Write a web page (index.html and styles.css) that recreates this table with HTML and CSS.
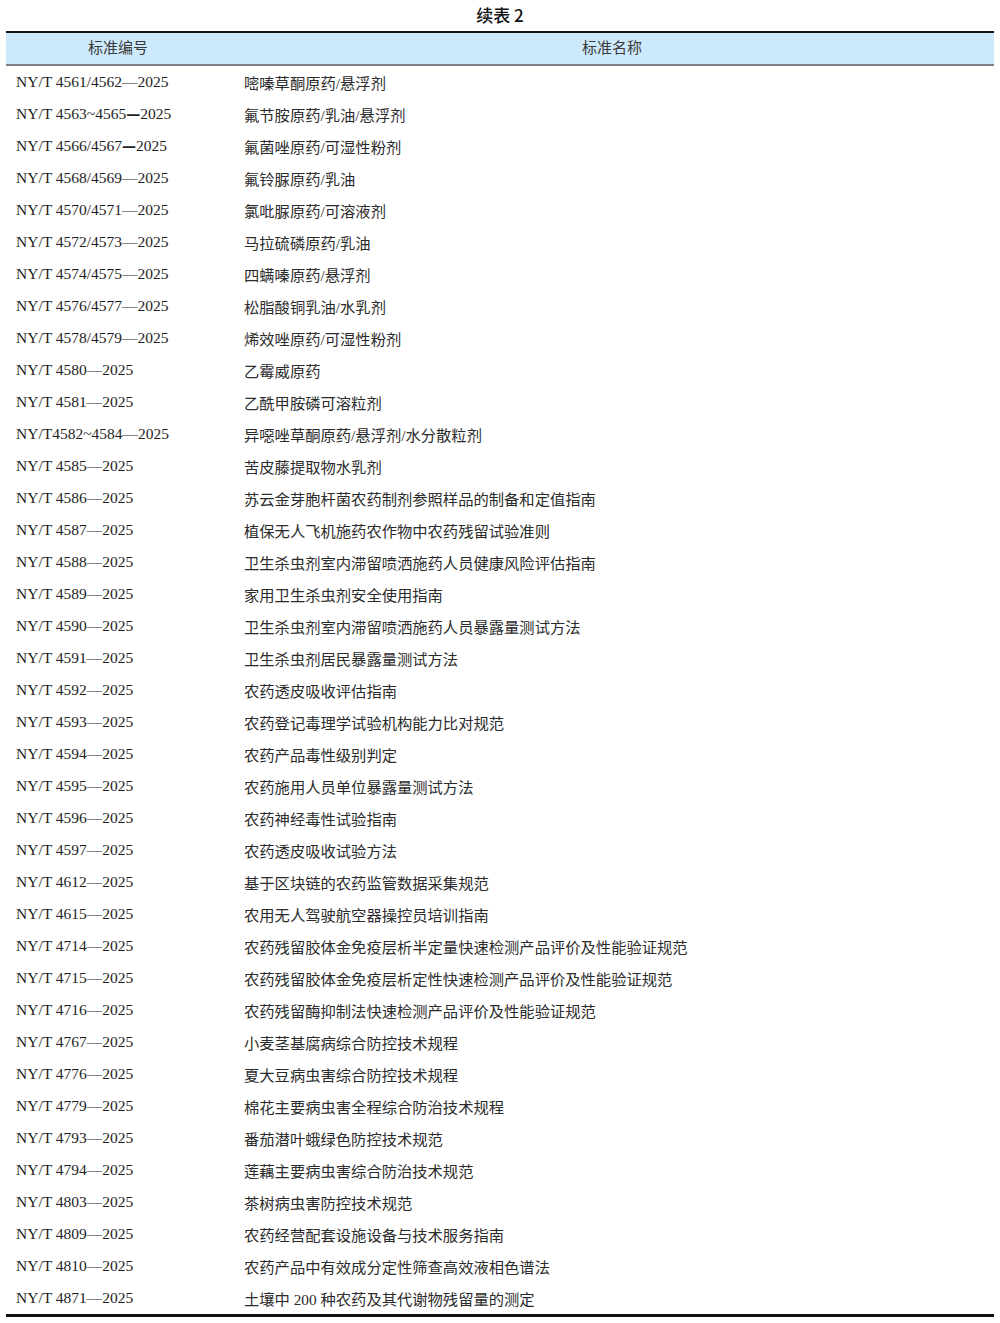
FILE: index.html
```html
<!DOCTYPE html>
<html lang="zh">
<head>
<meta charset="utf-8">
<link rel="stylesheet" href="styles.css">
</head>
<body>
<div class="title">续表 2</div>
<div class="table">
  <div class="head">
    <div class="hc c1">标准编号</div>
    <div class="hc c2">标准名称</div>
  </div>
  <div class="body">
    <div class="row"><div class="code">NY/T 4561/4562—2025</div><div class="name">嘧嗪草酮原药/悬浮剂</div></div>
    <div class="row"><div class="code">NY/T 4563~4565<span class="bold-dash">—</span>2025</div><div class="name">氟节胺原药/乳油/悬浮剂</div></div>
    <div class="row"><div class="code">NY/T 4566/4567<span class="bold-dash">—</span>2025</div><div class="name">氟菌唑原药/可湿性粉剂</div></div>
    <div class="row"><div class="code">NY/T 4568/4569—2025</div><div class="name">氟铃脲原药/乳油</div></div>
    <div class="row"><div class="code">NY/T 4570/4571—2025</div><div class="name">氯吡脲原药/可溶液剂</div></div>
    <div class="row"><div class="code">NY/T 4572/4573—2025</div><div class="name">马拉硫磷原药/乳油</div></div>
    <div class="row"><div class="code">NY/T 4574/4575—2025</div><div class="name">四螨嗪原药/悬浮剂</div></div>
    <div class="row"><div class="code">NY/T 4576/4577—2025</div><div class="name">松脂酸铜乳油/水乳剂</div></div>
    <div class="row"><div class="code">NY/T 4578/4579—2025</div><div class="name">烯效唑原药/可湿性粉剂</div></div>
    <div class="row"><div class="code">NY/T 4580—2025</div><div class="name">乙霉威原药</div></div>
    <div class="row"><div class="code">NY/T 4581—2025</div><div class="name">乙酰甲胺磷可溶粒剂</div></div>
    <div class="row"><div class="code">NY/T4582~4584—2025</div><div class="name">异噁唑草酮原药/悬浮剂/水分散粒剂</div></div>
    <div class="row"><div class="code">NY/T 4585—2025</div><div class="name">苦皮藤提取物水乳剂</div></div>
    <div class="row"><div class="code">NY/T 4586—2025</div><div class="name">苏云金芽胞杆菌农药制剂参照样品的制备和定值指南</div></div>
    <div class="row"><div class="code">NY/T 4587—2025</div><div class="name">植保无人飞机施药农作物中农药残留试验准则</div></div>
    <div class="row"><div class="code">NY/T 4588—2025</div><div class="name">卫生杀虫剂室内滞留喷洒施药人员健康风险评估指南</div></div>
    <div class="row"><div class="code">NY/T 4589—2025</div><div class="name">家用卫生杀虫剂安全使用指南</div></div>
    <div class="row"><div class="code">NY/T 4590—2025</div><div class="name">卫生杀虫剂室内滞留喷洒施药人员暴露量测试方法</div></div>
    <div class="row"><div class="code">NY/T 4591—2025</div><div class="name">卫生杀虫剂居民暴露量测试方法</div></div>
    <div class="row"><div class="code">NY/T 4592—2025</div><div class="name">农药透皮吸收评估指南</div></div>
    <div class="row"><div class="code">NY/T 4593—2025</div><div class="name">农药登记毒理学试验机构能力比对规范</div></div>
    <div class="row"><div class="code">NY/T 4594—2025</div><div class="name">农药产品毒性级别判定</div></div>
    <div class="row"><div class="code">NY/T 4595—2025</div><div class="name">农药施用人员单位暴露量测试方法</div></div>
    <div class="row"><div class="code">NY/T 4596—2025</div><div class="name">农药神经毒性试验指南</div></div>
    <div class="row"><div class="code">NY/T 4597—2025</div><div class="name">农药透皮吸收试验方法</div></div>
    <div class="row"><div class="code">NY/T 4612—2025</div><div class="name">基于区块链的农药监管数据采集规范</div></div>
    <div class="row"><div class="code">NY/T 4615—2025</div><div class="name">农用无人驾驶航空器操控员培训指南</div></div>
    <div class="row"><div class="code">NY/T 4714—2025</div><div class="name">农药残留胶体金免疫层析半定量快速检测产品评价及性能验证规范</div></div>
    <div class="row"><div class="code">NY/T 4715—2025</div><div class="name">农药残留胶体金免疫层析定性快速检测产品评价及性能验证规范</div></div>
    <div class="row"><div class="code">NY/T 4716—2025</div><div class="name">农药残留酶抑制法快速检测产品评价及性能验证规范</div></div>
    <div class="row"><div class="code">NY/T 4767—2025</div><div class="name">小麦茎基腐病综合防控技术规程</div></div>
    <div class="row"><div class="code">NY/T 4776—2025</div><div class="name">夏大豆病虫害综合防控技术规程</div></div>
    <div class="row"><div class="code">NY/T 4779—2025</div><div class="name">棉花主要病虫害全程综合防治技术规程</div></div>
    <div class="row"><div class="code">NY/T 4793—2025</div><div class="name">番茄潜叶蛾绿色防控技术规范</div></div>
    <div class="row"><div class="code">NY/T 4794—2025</div><div class="name">莲藕主要病虫害综合防治技术规范</div></div>
    <div class="row"><div class="code">NY/T 4803—2025</div><div class="name">茶树病虫害防控技术规范</div></div>
    <div class="row"><div class="code">NY/T 4809—2025</div><div class="name">农药经营配套设施设备与技术服务指南</div></div>
    <div class="row"><div class="code">NY/T 4810—2025</div><div class="name">农药产品中有效成分定性筛查高效液相色谱法</div></div>
    <div class="row"><div class="code">NY/T 4871—2025</div><div class="name">土壤中 200 种农药及其代谢物残留量的测定</div></div>
  </div>
</div>
</body>
</html>
```

FILE: styles.css
```css
html, body {
  margin: 0;
  padding: 0;
  background: #ffffff;
}
body {
  width: 1000px;
  font-family: "Liberation Serif", "Noto Sans CJK SC", serif;
  color: #1e1e1e;
}
.title {
  height: 31px;
  line-height: 30px;
  text-align: center;
  font-family: "Noto Sans CJK SC", "Liberation Sans", sans-serif;
  font-size: 17px;
  font-weight: 500;
  color: #111;
}
.table {
  margin-left: 6px;
  width: 988px;
  border-top: 2px solid #111;
  border-bottom: 3px solid #111;
}
.head {
  display: grid;
  grid-template-columns: 224px 1fr;
  height: 31px;
  background: #cdeafc;
  border-bottom: 2px solid #7d8288;
}
.hc {
  text-align: center;
  line-height: 31px;
  font-size: 15px;
  color: #3a3a3a;
  font-family: "Liberation Serif", "Noto Sans CJK SC", serif;
}
.row {
  display: grid;
  grid-template-columns: 224px 1fr;
  height: 32px;
  align-items: center;
}
.code {
  padding-left: 10px;
  white-space: nowrap;
  font-size: 15.5px;
}
.name {
  padding-left: 14px;
  white-space: nowrap;
  font-size: 15.3px;
  color: #2b2b2b;
}
.bold-dash {
  font-family: "DejaVu Sans", sans-serif;
  font-weight: bold;
  font-size: 14px;
}
```
